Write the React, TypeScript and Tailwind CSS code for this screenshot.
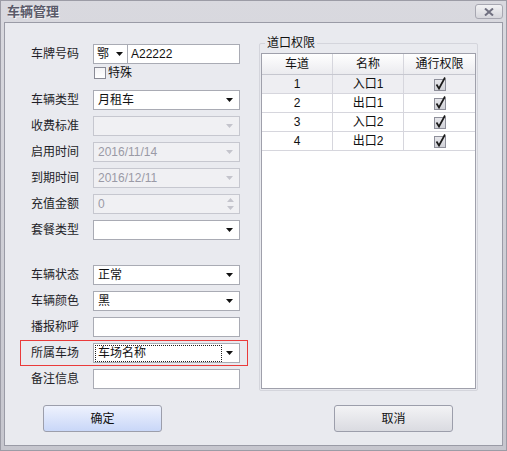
import React from "react";

const FONT = { fontFamily: '"Liberation Sans", "Noto Sans CJK SC", sans-serif' };

function Arrow({ disabled }: { disabled?: boolean }) {
  return (
    <svg width="7" height="4" viewBox="0 0 7 4" className="shrink-0">
      <path d="M0 0 L7 0 L3.5 4 Z" fill={disabled ? "#c4c4cc" : "#111"} />
    </svg>
  );
}

function Label({ children }: { children: React.ReactNode }) {
  return <div className="w-[62px] shrink-0 text-[12px] text-[#1e1e28] leading-none">{children}</div>;
}

function Select({ value, disabled, focus }: { value?: string; disabled?: boolean; focus?: boolean }) {
  return (
    <div
      className={
        "flex h-[20px] w-[147px] items-center border pr-[6px] " +
        (disabled ? "border-[#c6c7cf] bg-[#f0f0f3]" : "border-[#a9abb4] bg-white")
      }
    >
      <div className="flex flex-1 items-center pl-[1px]">
        {focus ? (
          <span className="flex h-[17px] w-[127px] items-center border border-dotted border-[#222] pl-[2px] text-[12px] text-[#111]">
            {value}
          </span>
        ) : (
          <span className={"pl-[3px] text-[12px] " + (disabled ? "text-[#9a9aa6]" : "text-[#111]")}>{value}</span>
        )}
      </div>
      <Arrow disabled={disabled} />
    </div>
  );
}

function Row({ label, children }: { label: string; children: React.ReactNode }) {
  return (
    <div className="flex h-[20px] items-center">
      <Label>{label}</Label>
      {children}
    </div>
  );
}

function TextBox({ value }: { value?: string }) {
  return <div className="h-[20px] w-[147px] border border-[#a9abb4] bg-white text-[12px]">{value}</div>;
}

function Check() {
  return (
    <svg width="16" height="16" viewBox="0 0 16 16">
      <defs>
        <linearGradient id="cg" x1="0" y1="0" x2="0" y2="1">
          <stop offset="0" stopColor="#e8e8ec" />
          <stop offset="1" stopColor="#cfd0d6" />
        </linearGradient>
      </defs>
      <rect x="2.5" y="3.5" width="11" height="11" fill="url(#cg)" stroke="#8e8f9a" />
      <path d="M4.5 8.5 L7 12.5 L13 1.5" fill="none" stroke="#1a1a1a" strokeWidth="1.7" />
    </svg>
  );
}

export default function App() {
  const rows = [
    ["1", "入口1"],
    ["2", "出口1"],
    ["3", "入口2"],
    ["4", "出口2"],
  ];
  return (
    <div
      style={FONT}
      className="flex h-[451px] w-[507px] flex-col border border-[#9c9ca6] bg-gradient-to-b from-[#d9d9df] to-[#c6c6ce]"
    >
      {/* title bar */}
      <div className="flex h-[21px] shrink-0 items-start justify-between pl-[6px] pr-[3px]">
        <div
          className="mt-[3px] text-[13px] font-bold leading-[15px] text-[#5b5b6a]"
          style={{ textShadow: "1px 1px 0 #f4f4f6" }}
        >
          车辆管理
        </div>
        <div className="mt-[3px] flex h-[15px] w-[28px] items-center justify-center rounded-[3px] border border-[#a7a7b1] bg-gradient-to-b from-[#f2f2f4] to-[#d6d6dc]">
          <svg width="10" height="8" viewBox="0 0 10 8">
            <path d="M1 0.5 L9 7.5 M9 0.5 L1 7.5" stroke="#707080" strokeWidth="2" />
          </svg>
        </div>
      </div>

      {/* content */}
      <div className="mx-[3px] flex h-[424px] flex-col border border-[#9a9ba6] bg-[#e9eaef]">
        <div className="flex pl-[26px] pt-[20px]">
          {/* left form */}
          <div className="mt-[1px] flex w-[209px] flex-col">
            <Row label="车牌号码">
              <div className="flex h-[20px] w-[147px] border border-[#a9abb4] bg-white">
                <div className="flex w-[34px] items-center border-r border-[#a9abb4] pl-[3px]">
                  <span className="text-[12px] text-[#111]">鄂</span>
                  <span className="ml-[7px]">
                    <Arrow />
                  </span>
                </div>
                <div className="flex items-center pl-[3px] text-[12px] text-[#111]">A22222</div>
              </div>
            </Row>
            <div className="ml-[63px] mt-[2px] flex h-[13px] items-center">
              <div className="h-[12px] w-[12px] border border-[#8a8b96] bg-gradient-to-b from-[#f4f4f6] to-[#ffffff]" />
              <span className="ml-[2px] text-[12px] text-[#111]">特殊</span>
            </div>
            <div className="mt-[11px] flex flex-col gap-[6px]">
              <Row label="车辆类型">
                <Select value="月租车" />
              </Row>
              <Row label="收费标准">
                <Select disabled />
              </Row>
              <Row label="启用时间">
                <Select value="2016/11/14" disabled />
              </Row>
              <Row label="到期时间">
                <Select value="2016/12/11" disabled />
              </Row>
              <Row label="充值金额">
                <div className="flex h-[20px] w-[147px] items-center border border-[#c6c7cf] bg-[#f0f0f3] pr-[5px]">
                  <span className="flex-1 pl-[4px] text-[12px] text-[#9a9aa6]">0</span>
                  <div className="flex flex-col gap-[4px]">
                    <svg width="7" height="4" viewBox="0 0 7 4">
                      <path d="M0 4 L7 4 L3.5 0 Z" fill="#c4c4cc" />
                    </svg>
                    <svg width="7" height="4" viewBox="0 0 7 4">
                      <path d="M0 0 L7 0 L3.5 4 Z" fill="#c4c4cc" />
                    </svg>
                  </div>
                </div>
              </Row>
              <Row label="套餐类型">
                <Select />
              </Row>
            </div>
            <div className="mt-[25px] flex flex-col gap-[6px]">
              <Row label="车辆状态">
                <Select value="正常" />
              </Row>
              <Row label="车辆颜色">
                <Select value="黑" />
              </Row>
              <Row label="播报称呼">
                <TextBox />
              </Row>
              <div className="relative flex h-[20px] items-center">
                <span className="pointer-events-none absolute -bottom-[3px] -left-[11px] -right-[8px] -top-[3px] border border-[#ea3b3b]" />
                <Label>所属车场</Label>
                <Select value="车场名称" focus />
              </div>
              <Row label="备注信息">
                <TextBox />
              </Row>
            </div>
          </div>

          {/* right group */}
          <div className="relative ml-[19px] flex h-[348px] w-[219px] flex-col rounded-[2px] border border-[#d4d5dc] px-[1px] pb-[1px] pt-[9px]">
            <span className="absolute -top-[8px] left-[5px] bg-[#e9eaef] px-[2px] text-[12px] leading-[14px] text-[#111]">
              道口权限
            </span>
            <div className="flex flex-1 flex-col border border-[#9fa0ab] bg-white">
              <div className="grid h-[21px] grid-cols-[71px_71px_1fr] border-b border-[#c6c7cf] bg-gradient-to-b from-[#ffffff] to-[#ebebef] text-[12px] text-[#111]">
                <div className="flex items-center justify-center border-r border-[#d6d6dd]">车道</div>
                <div className="flex items-center justify-center border-r border-[#d6d6dd]">名称</div>
                <div className="flex items-center justify-center">通行权限</div>
              </div>
              {rows.map(([n, name], i) => (
                <div
                  key={n}
                  className={
                    "grid h-[19px] grid-cols-[71px_71px_1fr] border-b border-[#d6d6dd] text-[12px] text-[#111] " +
                    (i === 0 ? "bg-[#eeeef2]" : "bg-white")
                  }
                >
                  <div className="flex items-center justify-center border-r border-[#d6d6dd]">{n}</div>
                  <div className="flex items-center justify-center border-r border-[#d6d6dd]">{name}</div>
                  <div className="flex items-center justify-center">
                    <Check />
                  </div>
                </div>
              ))}
            </div>
          </div>
        </div>

        {/* buttons */}
        <div className="mt-[14px] flex pl-[38px]">
          <div className="flex h-[27px] w-[119px] items-center justify-center rounded-[3px] border border-[#9c9eab] bg-gradient-to-b from-[#eef2fd] to-[#c9d7f8] text-[12px] text-[#111]">
            确定
          </div>
          <div className="ml-[172px] flex h-[27px] w-[119px] items-center justify-center rounded-[3px] border border-[#9c9eab] bg-gradient-to-b from-[#f3f3f5] to-[#dadbe1] text-[12px] text-[#111]">
            取消
          </div>
        </div>
      </div>
    </div>
  );
}
